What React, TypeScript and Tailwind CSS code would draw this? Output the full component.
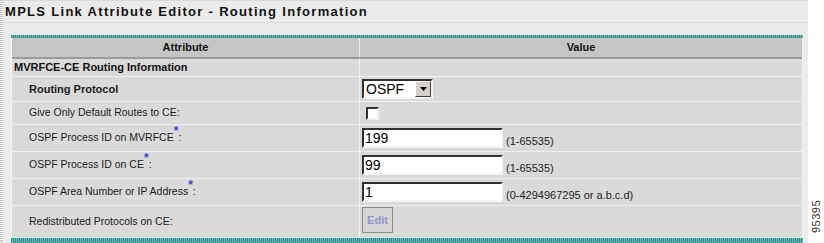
import type { ReactNode } from 'react';

const font = { fontFamily: '"Liberation Sans", Arial, sans-serif' };

function Req() {
  return <sup className="text-[12px] font-bold text-[#3347c8]">*</sup>;
}

function TextBox({ value }: { value: string }) {
  return (
    <div className="w-[141px] h-[20px] bg-white border-2 border-t-[#303030] border-l-[#303030] border-b-[#f4f4f4] border-r-[#f4f4f4] flex items-center pl-[1px] text-[14px] leading-none text-black">
      {value}
    </div>
  );
}

function Hint({ children }: { children: ReactNode }) {
  return <span className="ml-[3px] text-[11px] leading-[13px] text-[#222]">{children}</span>;
}

function Row({
  label,
  bold,
  height,
  align = 'center',
  children,
}: {
  label: ReactNode;
  bold?: boolean;
  height: string;
  align?: 'center' | 'start';
  children: ReactNode;
}) {
  return (
    <div className={`flex border-b border-[#f0f0f0] last:border-b-0 ${height}`}>
      <div
        className={`w-[347px] flex items-center pl-[17px] text-[#1a1a1a] ${bold ? 'font-bold text-[11px]' : 'text-[10.5px]'}`}
      >
        {label}
      </div>
      <div className="w-px bg-[#f2f2f2]" />
      <div className={`flex-1 flex pl-[2px] ${align === 'center' ? 'items-center' : 'items-start pt-[1px]'}`}>
        {children}
      </div>
    </div>
  );
}

export default function App() {
  return (
    <div className="w-[824px] h-[243px] bg-white flex overflow-hidden" style={font}>
      <div className="w-[809px] h-full bg-[#ebebeb] flex">
        {/* hatched left strip */}
        <div className="w-[3px] h-full bg-[repeating-linear-gradient(0deg,#c8c8c8_0_1px,#f2f2f2_1px_2px)]" />
        <div className="flex-1 flex flex-col">
          <div className="h-[23px] border-t border-b border-[#dadada] flex items-center pl-[2px]">
            <span className="text-[13px] font-bold tracking-[1.3px] text-[#111]">
              MPLS Link Attribute Editor - Routing Information
            </span>
          </div>
          <div className="h-[12px]" />
          <div className="w-[792px] ml-[8px] flex flex-col">
            <div className="h-[3px] bg-[repeating-linear-gradient(90deg,#2e8d88_0_1px,#6cbab5_1px_2px)]" />
            <div className="border-l border-r border-[#f4f4f4] bg-[#dadada] flex flex-col">
              {/* header */}
              <div className="h-[21px] flex bg-[#c5c5c5] border-b-2 border-[#9a9a9a] text-[11px] font-bold text-[#111]">
                <div className="w-[347px] flex items-center justify-center">Attribute</div>
                <div className="w-px bg-[#ececec]" />
                <div className="flex-1 flex items-center justify-center">Value</div>
              </div>
              {/* section */}
              <div className="h-[18px] flex border-b border-[#f0f0f0]">
                <div className="w-[347px] flex items-center pl-[2px] text-[11px] font-bold text-[#111]">
                  MVRFCE-CE Routing Information
                </div>
                <div className="w-px bg-[#f2f2f2]" />
                <div className="flex-1" />
              </div>
              <Row label="Routing Protocol" bold height="h-[25px]">
                <div className="w-[71px] h-[20px] bg-white border-2 border-t-[#303030] border-l-[#303030] border-b-[#f4f4f4] border-r-[#f4f4f4] flex items-center">
                  <span className="flex-1 pl-[2px] text-[14px] leading-none text-black">OSPF</span>
                  <div className="w-[16px] h-[16px] bg-[#d4d0c8] border border-t-white border-l-white border-b-[#404040] border-r-[#404040] flex items-center justify-center">
                    <svg width="7" height="4" viewBox="0 0 7 4">
                      <path d="M0 0h7L3.5 4z" fill="#000" />
                    </svg>
                  </div>
                </div>
              </Row>
              <Row label="Give Only Default Routes to CE:" height="h-[23px]">
                <div className="ml-[4px] w-[13px] h-[13px] bg-white border-2 border-t-[#303030] border-l-[#303030] border-b-[#f0f0f0] border-r-[#f0f0f0]" />
              </Row>
              <Row
                label={
                  <span>
                    OSPF Process ID on MVRFCE<Req />:
                  </span>
                }
                height="h-[27px]"
              >
                <div className="flex items-end">
                  <TextBox value="199" />
                  <Hint>(1-65535)</Hint>
                </div>
              </Row>
              <Row
                label={
                  <span>
                    OSPF Process ID on CE<Req />:
                  </span>
                }
                height="h-[27px]"
              >
                <div className="flex items-end">
                  <TextBox value="99" />
                  <Hint>(1-65535)</Hint>
                </div>
              </Row>
              <Row
                label={
                  <span>
                    OSPF Area Number or IP Address<Req />:
                  </span>
                }
                height="h-[27px]"
              >
                <div className="flex items-end">
                  <TextBox value="1" />
                  <Hint>(0-4294967295 or a.b.c.d)</Hint>
                </div>
              </Row>
              <Row label="Redistributed Protocols on CE:" height="h-[31px]" align="start">
                <button className="w-[31px] h-[26px] bg-[#d6d6d6] border border-[#8a8a8a] text-[11px] font-bold text-[#9494cc]">
                  Edit
                </button>
              </Row>
            </div>
            <div className="h-px bg-[#d4f0ee]" />
            <div className="h-[5px] bg-[repeating-linear-gradient(90deg,#2e8d88_0_1px,#6cbab5_1px_2px)]" />
          </div>
        </div>
      </div>
      <div className="flex-1 flex flex-col justify-end items-center pb-[10px]">
        <span className="[writing-mode:vertical-rl] rotate-180 text-[11px] text-[#333] tracking-[0.5px]">95395</span>
      </div>
    </div>
  );
}
